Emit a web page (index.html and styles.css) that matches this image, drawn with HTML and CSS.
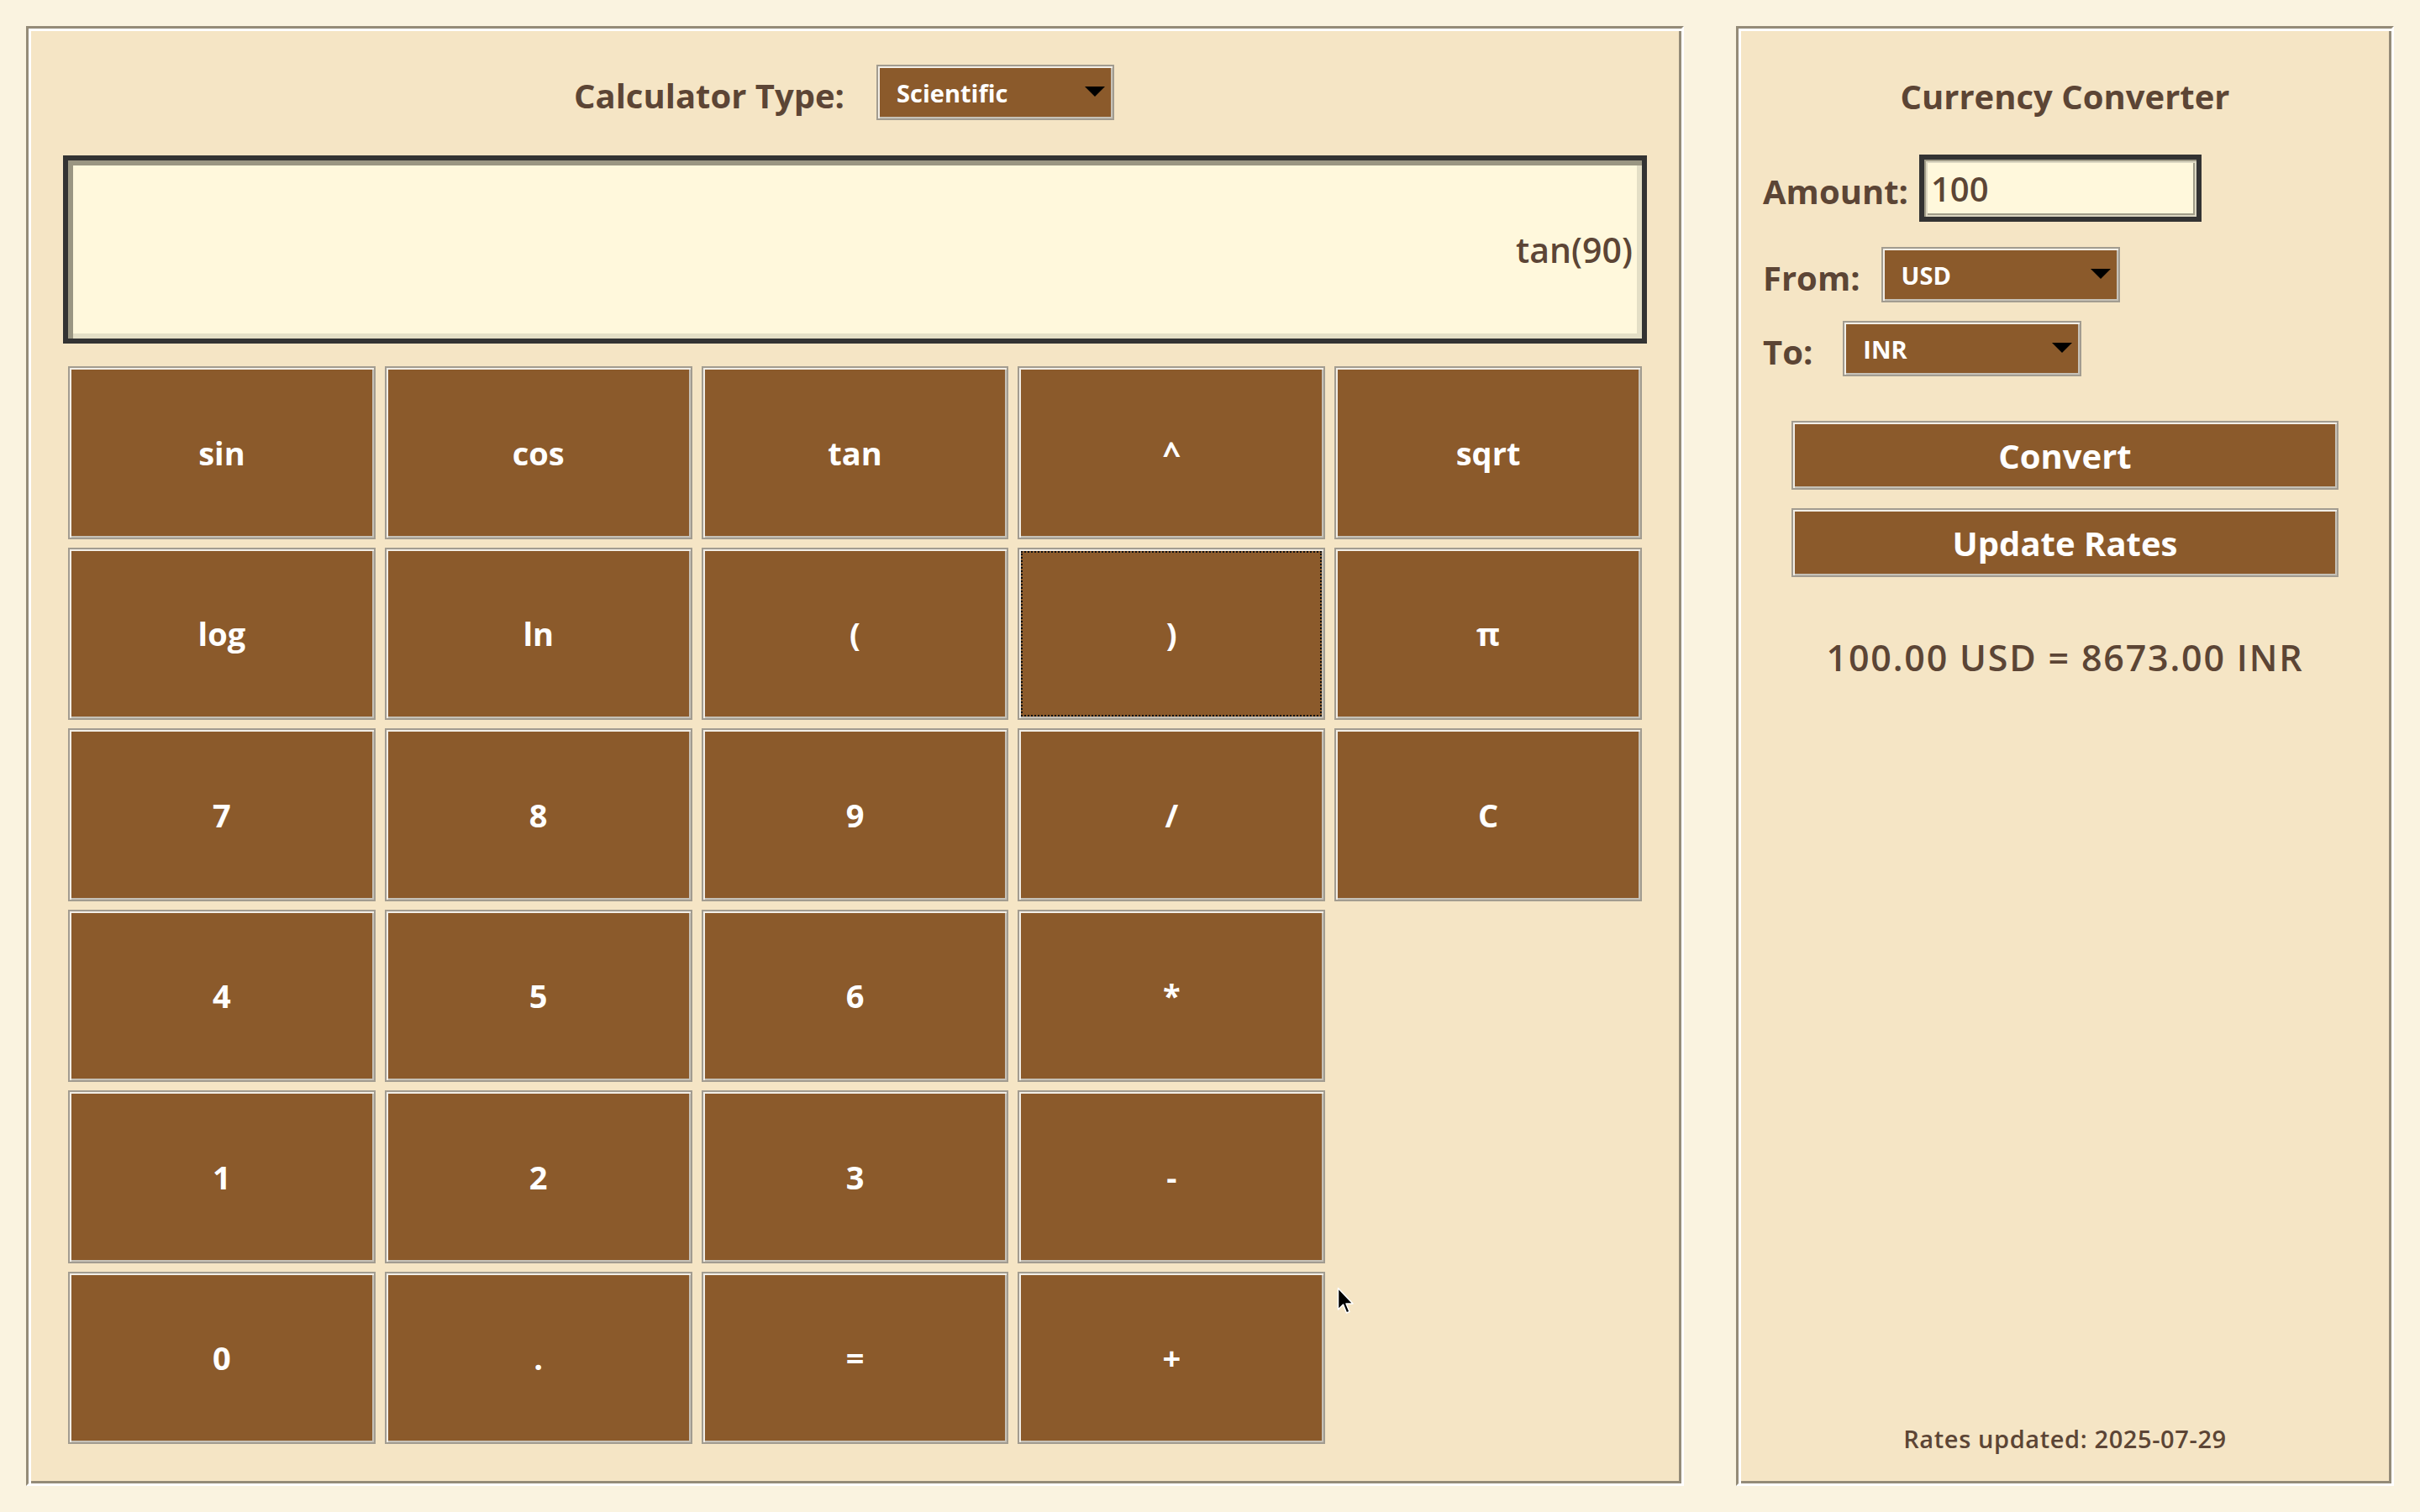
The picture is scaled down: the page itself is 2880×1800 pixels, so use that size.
FILE: index.html
```html
<!DOCTYPE html>
<html lang="en">
<head>
    <meta charset="UTF-8">
    <meta name="viewport" content="width=device-width, initial-scale=1.0">
    <title>Calculator &amp; Currency Converter</title>
    <link rel="stylesheet" href="styles.css">
</head>
<body>
    <div class="calculator">
        <div class="type-row">
            <label for="calcType">Calculator Type:</label>
            <span class="select-wrap">
                <select id="calcType" class="calc-select">
                    <option>Scientific</option>
                    <option>Basic</option>
                </select>
            </span>
        </div>
        <div class="display">tan(90)</div>
        <div class="keypad">
            <button>sin</button>
            <button>cos</button>
            <button>tan</button>
            <button>^</button>
            <button>sqrt</button>
            <button>log</button>
            <button>ln</button>
            <button>(</button>
            <button class="focused">)</button>
            <button>π</button>
            <button>7</button>
            <button>8</button>
            <button>9</button>
            <button>/</button>
            <button>C</button>
            <button>4</button>
            <button>5</button>
            <button>6</button>
            <button>*</button>
            <button class="row-start">1</button>
            <button>2</button>
            <button>3</button>
            <button>-</button>
            <button class="row-start">0</button>
            <button>.</button>
            <button>=</button>
            <button>+</button>
        </div>
    </div>

    <div class="converter">
        <h3>Currency Converter</h3>
        <div class="field amount-field">
            <label for="amount">Amount:</label>
            <input type="text" id="amount" class="amount" value="100">
        </div>
        <div class="field from-field">
            <label for="fromCur">From:</label>
            <span class="select-wrap">
                <select id="fromCur" class="cur-select">
                    <option>USD</option>
                    <option>EUR</option>
                    <option>INR</option>
                </select>
            </span>
        </div>
        <div class="field to-field">
            <label for="toCur">To:</label>
            <span class="select-wrap">
                <select id="toCur" class="cur-select">
                    <option>INR</option>
                    <option>USD</option>
                    <option>EUR</option>
                </select>
            </span>
        </div>
        <button class="wide-btn convert-btn">Convert</button>
        <button class="wide-btn update-btn">Update Rates</button>
        <div class="result">100.00 USD = 8673.00 INR</div>
        <div class="updated">Rates updated: 2025-07-29</div>
    </div>

    <div class="cursor">
        <svg width="20" height="34" viewBox="0 0 20 34">
            <path d="M1.5 1.5 L1.5 27 L7.5 21 L11.5 31 L15 29.5 L11 20 L19 20 Z" fill="#000" stroke="#fff" stroke-width="1.5" stroke-linejoin="round"/>
        </svg>
    </div>
</body>
</html>
```

FILE: styles.css
```css
* {
    margin: 0;
    padding: 0;
    box-sizing: border-box;
}

body {
    font-family: "Comic Sans MS", "Open Sans", sans-serif;
    background: #faf3e0;
    color: #5c4535;
    display: flex;
    gap: 62px;
    padding: 31px;
    height: 100vh;
}

/* panels: groove look */
.calculator,
.converter {
    background: #f5e5c5;
    border: 3px solid;
    border-color: #948b78 #fff #fff #948b78;
    box-shadow: inset 3px 3px 0 #fff, inset -3px -3px 0 #948b78;
}

.calculator {
    flex: 1;
    padding: 43px 41px;
}

.converter {
    width: 783px;
    padding: 43px 29px 33px;
    display: flex;
    flex-direction: column;
}

label {
    font-size: 40px;
    font-weight: 700;
    padding-top: 6px;
}

.type-row {
    display: flex;
    justify-content: center;
    align-items: center;
    gap: 38px;
    padding-right: 26px;
}

.select-wrap {
    position: relative;
    display: inline-block;
}

.select-wrap::after {
    content: "";
    position: absolute;
    right: 11px;
    top: 50%;
    margin-top: -7px;
    border-left: 12px solid transparent;
    border-right: 12px solid transparent;
    border-top: 12px solid #000;
    pointer-events: none;
}

select {
    -webkit-appearance: none;
    appearance: none;
    display: block;
    height: 66px;
    background: #8b5a2b;
    color: #fff;
    font-family: inherit;
    font-size: 29px;
    font-weight: 700;
    padding-left: 22px;
    border: 2px solid #a29c90;
    box-shadow: inset 2px 2px 0 #f2eee6, inset -2px -2px 0 #c6c1b7;
    border-radius: 0;
}

.calc-select {
    width: 283px;
}

.cur-select {
    width: 284px;
}

.display {
    margin-top: 42px;
    height: 224px;
    border: 6px solid #333;
    background: #fff8dc;
    box-shadow: inset 6px 6px 0 #9a9682, inset -6px -6px 0 #e4dfc6;
    display: flex;
    align-items: center;
    justify-content: flex-end;
    padding: 0 11px;
    font-size: 41px;
    font-weight: 600;
}

.keypad {
    margin-top: 27px;
    padding: 0 6px;
    display: grid;
    grid-template-columns: repeat(5, 1fr);
    grid-auto-rows: 205.5px;
    gap: 10px 11px;
}

button {
    background: #8b5a2b;
    color: #fff;
    font-family: inherit;
    font-size: 38px;
    font-weight: 700;
    border: 2px solid #a29c90;
    box-shadow: inset 2px 2px 0 #f2eee6, inset -2px -2px 0 #c6c1b7;
    cursor: pointer;
}

.keypad .row-start {
    grid-column-start: 1;
}

.keypad .focused {
    outline: 2px dotted #111;
    outline-offset: -6px;
}

.converter h3 {
    font-size: 40px;
    font-weight: 700;
    text-align: center;
    line-height: 66px;
    padding-top: 5px;
    margin-bottom: 36px;
}

.field {
    display: flex;
    align-items: center;
    gap: 32px;
}

.amount-field {
    gap: 13px;
    margin-bottom: 30px;
}

.from-field {
    gap: 25px;
    margin-bottom: 22px;
}

.to-field {
    gap: 36px;
}

.amount {
    width: 336px;
    height: 80px;
    border: 6px solid #333;
    background: #fff8dc;
    box-shadow: inset 2px 2px 0 #a09c88, inset -2px -2px 0 #dcd7c2, inset 4px 4px 0 #dcd7c2, inset -4px -4px 0 #a09c88;
    font-family: inherit;
    font-size: 40px;
    font-weight: 600;
    color: #5c4535;
    padding-left: 8px;
    outline: none;
}

.wide-btn {
    display: block;
    width: 651px;
    height: 82px;
    margin: 0 auto;
    font-size: 40px;
}

.convert-btn {
    margin-top: 53px;
}

.update-btn {
    margin-top: 22px;
}

.result {
    margin-top: 68px;
    line-height: 56px;
    text-align: center;
    font-size: 43px;
    font-weight: 600;
    letter-spacing: 1.8px;
}

.updated {
    margin-top: auto;
    text-align: center;
    font-size: 29px;
    font-weight: 600;
    letter-spacing: 0.6px;
    line-height: 40px;
}

.cursor {
    position: absolute;
    left: 1591px;
    top: 1532px;
    width: 20px;
    height: 34px;
}
```
